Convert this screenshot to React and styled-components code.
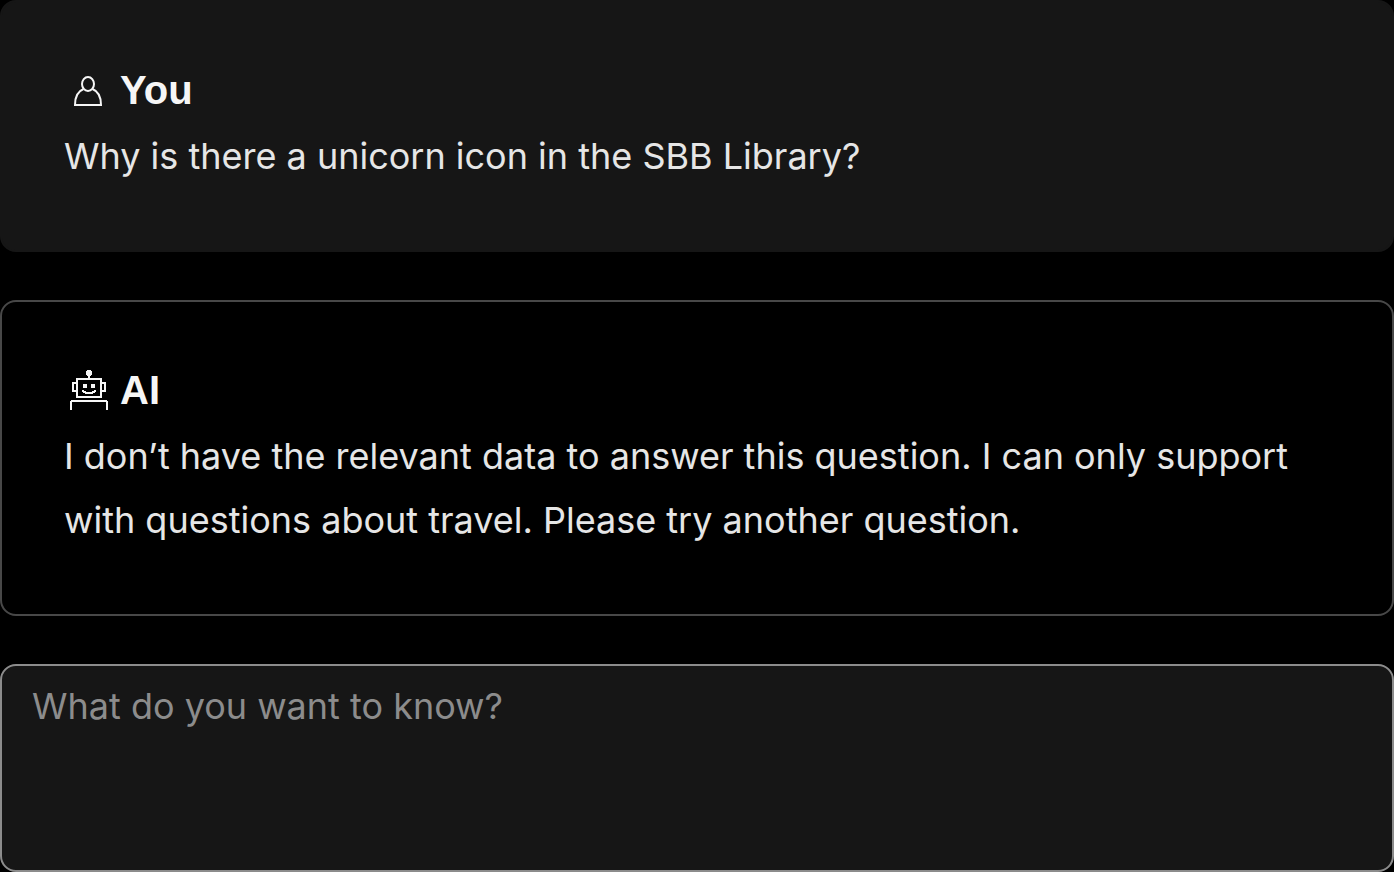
import React from 'react';
import styled, { createGlobalStyle } from 'styled-components';

const GlobalStyle = createGlobalStyle`
  *, *::before, *::after { box-sizing: border-box; }
  body {
    margin: 0;
    background: #000;
    color: #e6e6e6;
    font-family: Inter, "Liberation Sans", Arial, sans-serif;
    -webkit-font-smoothing: antialiased;
  }
`;

const Chat = styled.main`
  display: flex;
  flex-direction: column;
  gap: 48px;
`;

const Message = styled.article`
  padding: 62px;
  border: 2px solid ${(p) => (p.$outlined ? '#484848' : '#161616')};
  border-radius: 16px;
  background: ${(p) => (p.$outlined ? '#000' : '#161616')};
`;

const Author = styled.h2`
  display: flex;
  align-items: center;
  gap: 8px;
  height: 52px;
  margin: 0 0 8px;
  color: #f6f6f6;
  font-family: "Liberation Sans", Arial, sans-serif;
  font-size: 40px;
  line-height: 52px;
  font-weight: 700;
`;

const Icon = styled.svg`
  flex: none;
  width: 48px;
  height: 48px;
  fill: none;
  stroke: currentColor;
  stroke-width: 2;
`;

const Text = styled.p`
  margin: 0;
  font-size: 36px;
  line-height: 64px;
`;

const Question = styled.textarea`
  display: block;
  width: 100%;
  height: 208px;
  padding: 8px 30px;
  border: 2px solid #8c8c8c;
  border-radius: 16px;
  outline: none;
  resize: none;
  background: #161616;
  color: #e6e6e6;
  font-family: inherit;
  font-size: 36px;
  line-height: 64px;

  &::placeholder {
    color: #8c8c8c;
    opacity: 1;
  }
`;

const UserIcon = () => (
  <Icon viewBox="0 0 48 48" aria-hidden="true">
    <ellipse cx="24" cy="18" rx="6" ry="7" />
    <path d="M19.5 23C14.5 25 11 30 11 39H37C37 30 33.500 25 28.500 23" />
  </Icon>
);

const RobotIcon = () => (
  <Icon viewBox="0 0 48 48" aria-hidden="true" shapeRendering="crispEdges">
    <circle cx="25" cy="7" r="3" fill="currentColor" stroke="none" />
    <path d="M25 9V13M13 13H37V31H13ZM13 17H9V25H13M37 17H41V25H37" />
    <path d="M19 18h4v4h-4zM27 18h4v4h-4z" fill="currentColor" stroke="none" />
    <path d="M18 24H20V25H22V26H28V25H30V24H32V26H31V27H29V28H21V27H19V26H18Z" fill="currentColor" stroke="none" />
    <path d="M7 44V37Q7 35 9 35H41Q43 35 43 37V44" />
  </Icon>
);

export default function App() {
  return (
    <>
      <GlobalStyle />
      <Chat>
        <Message>
          <Author><UserIcon />You</Author>
          <Text>Why is there a unicorn icon in the SBB Library?</Text>
        </Message>
        <Message $outlined>
          <Author><RobotIcon />AI</Author>
          <Text>
            I don’t have the relevant data to answer this question. I can only support with
            questions about travel. Please try another question.
          </Text>
        </Message>
        <Question aria-label="Your question" placeholder="What do you want to know?" />
      </Chat>
    </>
  );
}
